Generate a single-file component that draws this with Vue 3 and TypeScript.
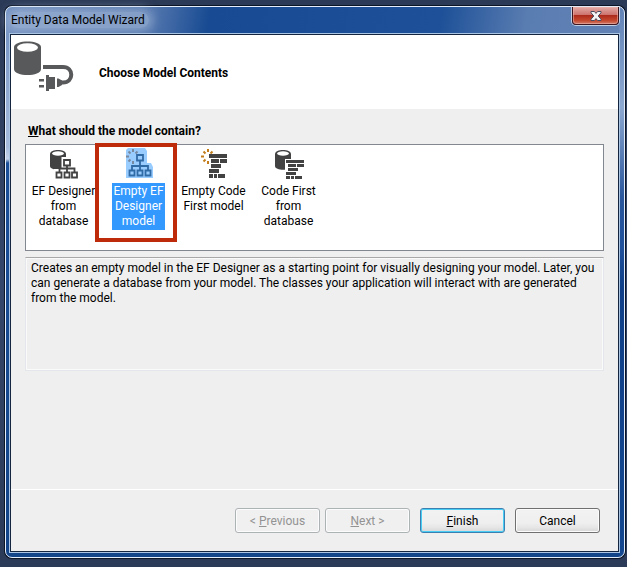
<script setup lang="ts">
import { ref } from 'vue'

interface ModelChoice {
  id: string
  lines: string[]
  source: 'database' | 'empty'
  output: 'designer' | 'code'
}

const choices: ModelChoice[] = [
  { id: 'designer-db', lines: ['EF Designer', 'from', 'database'], source: 'database', output: 'designer' },
  { id: 'designer-empty', lines: ['Empty EF', 'Designer', 'model'], source: 'empty', output: 'designer' },
  { id: 'code-empty', lines: ['Empty Code', 'First model'], source: 'empty', output: 'code' },
  { id: 'code-db', lines: ['Code First', 'from', 'database'], source: 'database', output: 'code' },
]

const selected = ref('designer-empty')
</script>

<template>
  <div class="desktop">
    <main class="window">
      <header class="titlebar">
        <h1 class="title">Entity Data Model Wizard</h1>
        <button class="close" type="button" aria-label="Close">
          <svg width="12" height="10" viewBox="0 0 12 10">
            <path d="M1 .5h3.400L6 2.400 7.600.5H11v1.300L8.200 5 11 8.200v1.300H7.600L6 7.600 4.400 9.500H1V8.200L3.800 5 1 1.800z" fill="#f4f4f4" stroke="#4c4a5c" stroke-width="1" />
          </svg>
        </button>
      </header>

      <div class="client">
        <section class="banner">
          <svg class="banner-icon" width="61" height="52" viewBox="0 0 61 52">
            <path d="M0 6C0-1.500 27-1.500 27 6v22c0 8-27 8-27 0z" fill="#58595b" />
            <ellipse cx="13.500" cy="6.500" rx="10.500" ry="4.300" fill="#fff" />
            <path d="M29 26h20c11 0 11 15.500 0 15.500h-2" fill="none" stroke="#58595b" stroke-width="4" />
            <path d="M32 34h3v2h6v12h-6v2h-3zM25 38h5v2.500h-5zM25 44h5v2.500h-5zM43 37.500h1.500L48 39.500v4.500l-3.500 2H43z" fill="#58595b" />
          </svg>
          <h2 class="banner-title">Choose Model Contents</h2>
        </section>

        <section class="content">
          <h3 id="question" class="question"><u>W</u>hat should the model contain?</h3>

          <div class="choices" role="listbox" aria-labelledby="question">
            <button
              v-for="choice in choices"
              :key="choice.id"
              class="choice"
              :class="{ selected: selected === choice.id }"
              type="button"
              role="option"
              :aria-selected="selected === choice.id"
              @click="selected = choice.id"
            >
              <svg class="choice-icon" width="32" height="32" viewBox="0 0 32 32">
                <path v-if="selected === choice.id" class="halo" d="M3 2l2-2h17l2 3v12h4l2 4v11H3z" />
                <g v-if="choice.source === 'database'">
                  <path class="ink" d="M2 6c0-5.500 16-5.500 16 0v12c0 5-16 5-16 0z" />
                  <ellipse cx="10" cy="5.500" rx="6" ry="2.200" fill="#fff" />
                </g>
                <g v-else class="rays">
                  <path d="M10 1v3M5.500 3.500l2 2M14.500 3.500l-2 2M3 8.500h3M5.500 13.500l2-2M10 13v3" />
                </g>

                <template v-if="choice.output === 'designer'">
                  <g v-if="choice.source === 'database'">
                    <path class="cutout" d="M13.500 9h11v9H32v14H6V21h7.500z" />
                    <path class="tree" d="M16 12h6v5.500h-6zM19 18v6M11.500 24v-3.500h15V24M8.500 24.500h5v5h-5zM16.500 24.500h5v5h-5zM24 24.500h5v5h-5z" />
                  </g>
                  <path v-else class="tree" d="M14 7h6v5.500h-6zM17 13v9M9 22v-4h16v4M6.500 22.500h5v5h-5zM14.500 22.500h5v5h-5zM22.500 22.500h5v5h-5z" />
                </template>
                <template v-else>
                  <g v-if="choice.source === 'database'">
                    <path class="cutout" d="M12 11h20v21H12z" />
                    <path class="ink" d="M13 12h18v3H13zM15 16h8v3h-8zM24 16h7v3h-7zM15 20h10v3H15zM13 24h10v3H13zM13 28h4v3h-4zM18 28h3v3h-3zM22 28h7v3h-7z" />
                  </g>
                  <path v-else class="ink" d="M11 6h18v4H11zM13 11h8v4h-8zM22 11h7v4h-7zM13 16h10v4H13zM11 21h10v4H11zM11 26h4v4h-4zM16 26h3v4h-3zM20 26h7v4h-7z" />
                </template>
              </svg>
              <span class="label">
                <span v-for="line in choice.lines" :key="line" class="line">{{ line }}</span>
              </span>
              <span v-if="choice.id === 'designer-empty'" class="marker" aria-hidden="true"></span>
            </button>
          </div>

          <p class="description">
            Creates an empty model in the EF Designer as a starting point for visually designing your model. Later, you
            can generate a database from your model. The classes your application will interact with are generated
            from the model.
          </p>
        </section>

        <footer class="footer">
          <button class="btn" type="button" disabled>&lt; <u>P</u>revious</button>
          <button class="btn" type="button" disabled><u>N</u>ext &gt;</button>
          <button class="btn primary" type="button"><u>F</u>inish</button>
          <button class="btn" type="button">Cancel</button>
        </footer>
      </div>
    </main>
  </div>
</template>

<style>
body {
  margin: 0;
}
</style>

<style scoped>
* {
  box-sizing: border-box;
}

.desktop {
  display: flex;
  min-height: 100vh;
  padding: 5px 1px 8px 4px;
  background: linear-gradient(#2b3a57, #34466a 50%, #2b3a57);
  color: #000;
  font: 12px/15px "Segoe UI", Roboto, sans-serif;
}

.window {
  display: flex;
  flex: 1;
  flex-direction: column;
  min-width: 0;
  margin: 1px;
  padding: 1px 5px 5px 4px;
  border: 1px solid #e4eefa;
  border-radius: 7px;
  box-shadow: 0 0 0 1px #0b1526;
  background:
    linear-gradient(#6d8dc0 0, #a7bcdd 140px, #c4d3e9 152px, #1b4f98 156px, #134489 100%) left / 4px 100% no-repeat,
    linear-gradient(#6283b7 0, #8da9d1 100px, #2a579d 190px, #1f519c 240px, #0e3f88 280px, #134890 100%) right / 5px 100% no-repeat,
    linear-gradient(100deg, #6f8dbd 0, #5175ad 24%, #174a92 33%, #1d5098 70%, #5a7db1 84%, #6382b5 100%) top / 100% 29px no-repeat,
    #124489;
}

.titlebar {
  display: flex;
  height: 26px;
  align-items: flex-start;
  justify-content: space-between;
}

.title {
  margin: 4px 0 0;
  padding: 0 4px 0 1px;
  border-radius: 8px;
  background: #b4c5df80;
  box-shadow: 0 0 10px 4px #b4c5df80;
  font-size: 12px;
  font-weight: 400;
  line-height: 16px;
}

.close {
  display: flex;
  width: 47px;
  height: 18px;
  align-items: center;
  justify-content: center;
  margin-top: -1px;
  padding: 0;
  border: 1px solid #3e1620;
  border-top: 0;
  border-radius: 0 0 4px 4px;
  background: linear-gradient(#e3aaa6, #cc706b 48%, #ad2b1d 50%, #c5492f 80%, #d17c6c);
  box-shadow: inset 0 0 0 1px #eeb3aa90, 0 0 0 1px #e0e8f4c0;
}

.client {
  display: flex;
  flex: 1;
  flex-direction: column;
  border: 1px solid #14253f;
  outline: 1px solid #aac4e4;
  background: #efefef;
}

.banner {
  display: flex;
  height: 74px;
  align-items: center;
  gap: 24px;
  padding-left: 3px;
  background: #fff;
}

.banner-icon {
  flex: none;
  margin-bottom: 10px;
}

.banner-title,
.question {
  margin: 0;
  padding-top: 2px;
  font-size: 12px;
  font-weight: 700;
}

.content {
  flex: 1;
  padding: 13px 14px 0;
}

.question {
  padding-left: 3px;
}

.choices {
  display: flex;
  height: 107px;
  margin-top: 5px;
  border: 1px solid #828790;
  background: #fff;
}

.choice {
  position: relative;
  display: flex;
  width: 75px;
  flex-direction: column;
  align-items: center;
  gap: 3px;
  padding: 3px 0 0;
  border: 0;
  background: none;
  color: inherit;
  font: inherit;
}

.choice-icon {
  flex: none;
}

.label {
  padding: 1px;
  white-space: nowrap;
}

.line {
  display: block;
}

.selected .label {
  background: #3399ff;
  color: #fff;
}

.marker {
  position: absolute;
  top: -2px;
  left: -6px;
  width: 82px;
  height: 99px;
  border: 4px solid #bd2b0b;
}

.halo {
  fill: #99ccff;
}

.ink {
  fill: #424242;
}

.cutout {
  fill: #fff;
}

.tree {
  fill: none;
  stroke: #424242;
  stroke-width: 1.800;
}

.rays {
  fill: none;
  stroke: #c27d1a;
  stroke-width: 2;
}

.selected .tree {
  stroke: #316ba5;
}

.selected .ink {
  fill: #316ba5;
}

.selected .rays {
  stroke: #788aa0;
}

.description {
  min-height: 114px;
  margin: 6px 0 0;
  padding: 3px 5px;
  border: 1px solid #e3e6ea;
  border-top-color: #a8a8a8;
  box-shadow: inset 0 0 0 1px #fafafa;
}

.footer {
  display: flex;
  justify-content: flex-end;
  gap: 10px;
  padding: 18px;
  border-top: 1px solid #fff;
}

.btn {
  width: 85px;
  height: 25px;
  padding: 2px 0 0;
  border: 1px solid #707070;
  border-radius: 3px;
  background: linear-gradient(#f2f2f2, #efefef 60%, #e6e6e6 80%, #d6d6d6);
  box-shadow: inset 0 0 0 1px #fcfcfc;
  color: #000;
  font: inherit;
}

.btn:disabled {
  border-color: #adb2b5;
  background: #f0f0f0;
  color: #939393;
}

.btn:disabled + .btn:disabled {
  margin-left: -5px;
}

.primary {
  border-color: #3c7fb1;
  box-shadow: inset 0 0 0 1px #48cdf5;
}
</style>
